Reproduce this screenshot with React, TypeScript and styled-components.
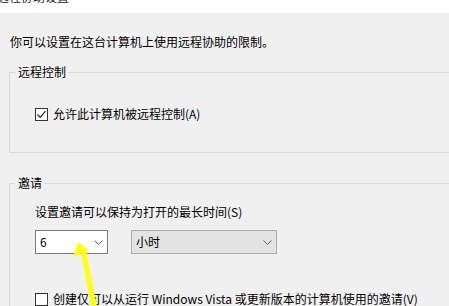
import React from 'react';
import styled, { createGlobalStyle } from 'styled-components';

const GlobalStyle = createGlobalStyle`
  html, body {
    margin: 0;
    padding: 0;
    background: #f0f0f0;
  }
  body {
    font-family: "Noto Sans CJK SC", "Noto Sans", sans-serif;
    font-size: 12px;
    color: #000;
  }
`;

const Page = styled.div`
  position: relative;
  width: 449px;
  height: 306px;
  overflow: hidden;
  background: #f0f0f0;
`;

const TitleBar = styled.div`
  height: 13px;
  background: #fff;
  overflow: hidden;
`;

const TitleText = styled.div`
  margin-top: -11px;
  margin-left: -3px;
  line-height: 16px;
  font-size: 12px;
  color: #222;
`;

const Content = styled.div`
  padding-left: 9px;
`;

const Intro = styled.div`
  margin-top: 21px;
  margin-left: 1px;
  line-height: 16px;
`;

const Group = styled.fieldset<{ $top: number; $bottom: number; $closed?: boolean }>`
  margin: ${({ $top }) => $top}px 0 0 0;
  padding: 0 0 ${({ $bottom }) => $bottom}px 5px;
  border: 1px solid #d8d8d8;
  border-right: none;
  border-bottom: ${({ $closed }) => ($closed ? '1px solid #d8d8d8' : 'none')};
  min-width: 0;
  width: 460px;
`;

const Legend = styled.legend`
  padding: 0 2px 0 3px;
  line-height: 14px;
`;

const GroupBody = styled.div<{ $top: number }>`
  padding: ${({ $top }) => $top}px 0 0 20px;
  display: flex;
  flex-direction: column;
`;

const CheckRow = styled.label<{ $top?: number }>`
  display: flex;
  align-items: center;
  gap: 5px;
  margin-top: ${({ $top }) => $top ?? 0}px;
  line-height: 16px;
  white-space: nowrap;
`;

const Box = styled.span`
  width: 11px;
  height: 11px;
  border: 1px solid #333;
  background: #fff;
  display: flex;
  align-items: center;
  justify-content: center;
  flex-shrink: 0;
`;

const Text = styled.div`
  line-height: 16px;
`;

const SelectRow = styled.div`
  display: flex;
  gap: 23px;
  margin-top: 10px;
`;

const Combo = styled.div<{ $width: number; $disabled?: boolean }>`
  width: ${({ $width }) => $width}px;
  height: 24px;
  box-sizing: border-box;
  border: 1px solid ${({ $disabled }) => ($disabled ? '#adadad' : '#7a7a7a')};
  background: ${({ $disabled }) => ($disabled ? '#e3e3e3' : '#fff')};
  display: flex;
  align-items: center;
  justify-content: space-between;
  padding: 0 4px 0 4px;
`;

const ComboText = styled.span`
  line-height: 16px;
`;

const Chevron = () => (
  <svg width="9" height="5" viewBox="0 0 9 5">
    <path d="M0.5 0.5 L4.5 4.5 L8.5 0.5" fill="none" stroke="#606060" strokeWidth="1" />
  </svg>
);

const Check = () => (
  <svg width="11" height="11" viewBox="0 0 11 11">
    <path d="M1.5 5.5 L4.2 8.3 L9.5 2.2" fill="none" stroke="#222" strokeWidth="1.2" />
  </svg>
);

const Arrow = styled.svg`
  position: absolute;
  left: 0;
  top: 0;
  pointer-events: none;
`;

export default function App() {
  return (
    <Page>
      <GlobalStyle />
      <TitleBar>
        <TitleText>远程协助设置</TitleText>
      </TitleBar>
      <Content>
        <Intro>你可以设置在这台计算机上使用远程协助的限制。</Intro>
        <Group $top={15} $bottom={30} $closed>
          <Legend>远程控制</Legend>
          <GroupBody $top={27}>
            <CheckRow>
              <Box>
                <Check />
              </Box>
              允许此计算机被远程控制(A)
            </CheckRow>
          </GroupBody>
        </Group>
        <Group $top={23} $bottom={0}>
          <Legend>邀请</Legend>
          <GroupBody $top={14}>
            <Text>设置邀请可以保持为打开的最长时间(S)</Text>
            <SelectRow>
              <Combo $width={73}>
                <ComboText>6</ComboText>
                <Chevron />
              </Combo>
              <Combo $width={146} $disabled>
                <ComboText>小时</ComboText>
                <Chevron />
              </Combo>
            </SelectRow>
            <CheckRow $top={37}>
              <Box />
              创建仅可以从运行 Windows Vista 或更新版本的计算机使用的邀请(V)
            </CheckRow>
          </GroupBody>
        </Group>
      </Content>
      <Arrow width="449" height="306" viewBox="0 0 449 306">
        <defs>
          <filter id="soft">
            <feGaussianBlur stdDeviation="0.4" />
          </filter>
        </defs>
        <g fill="#ffff14" filter="url(#soft)">
          <polygon points="78,242 73,257 89,250" />
          <polygon points="81,252 86,251 97,306 91,306" />
        </g>
      </Arrow>
    </Page>
  );
}
